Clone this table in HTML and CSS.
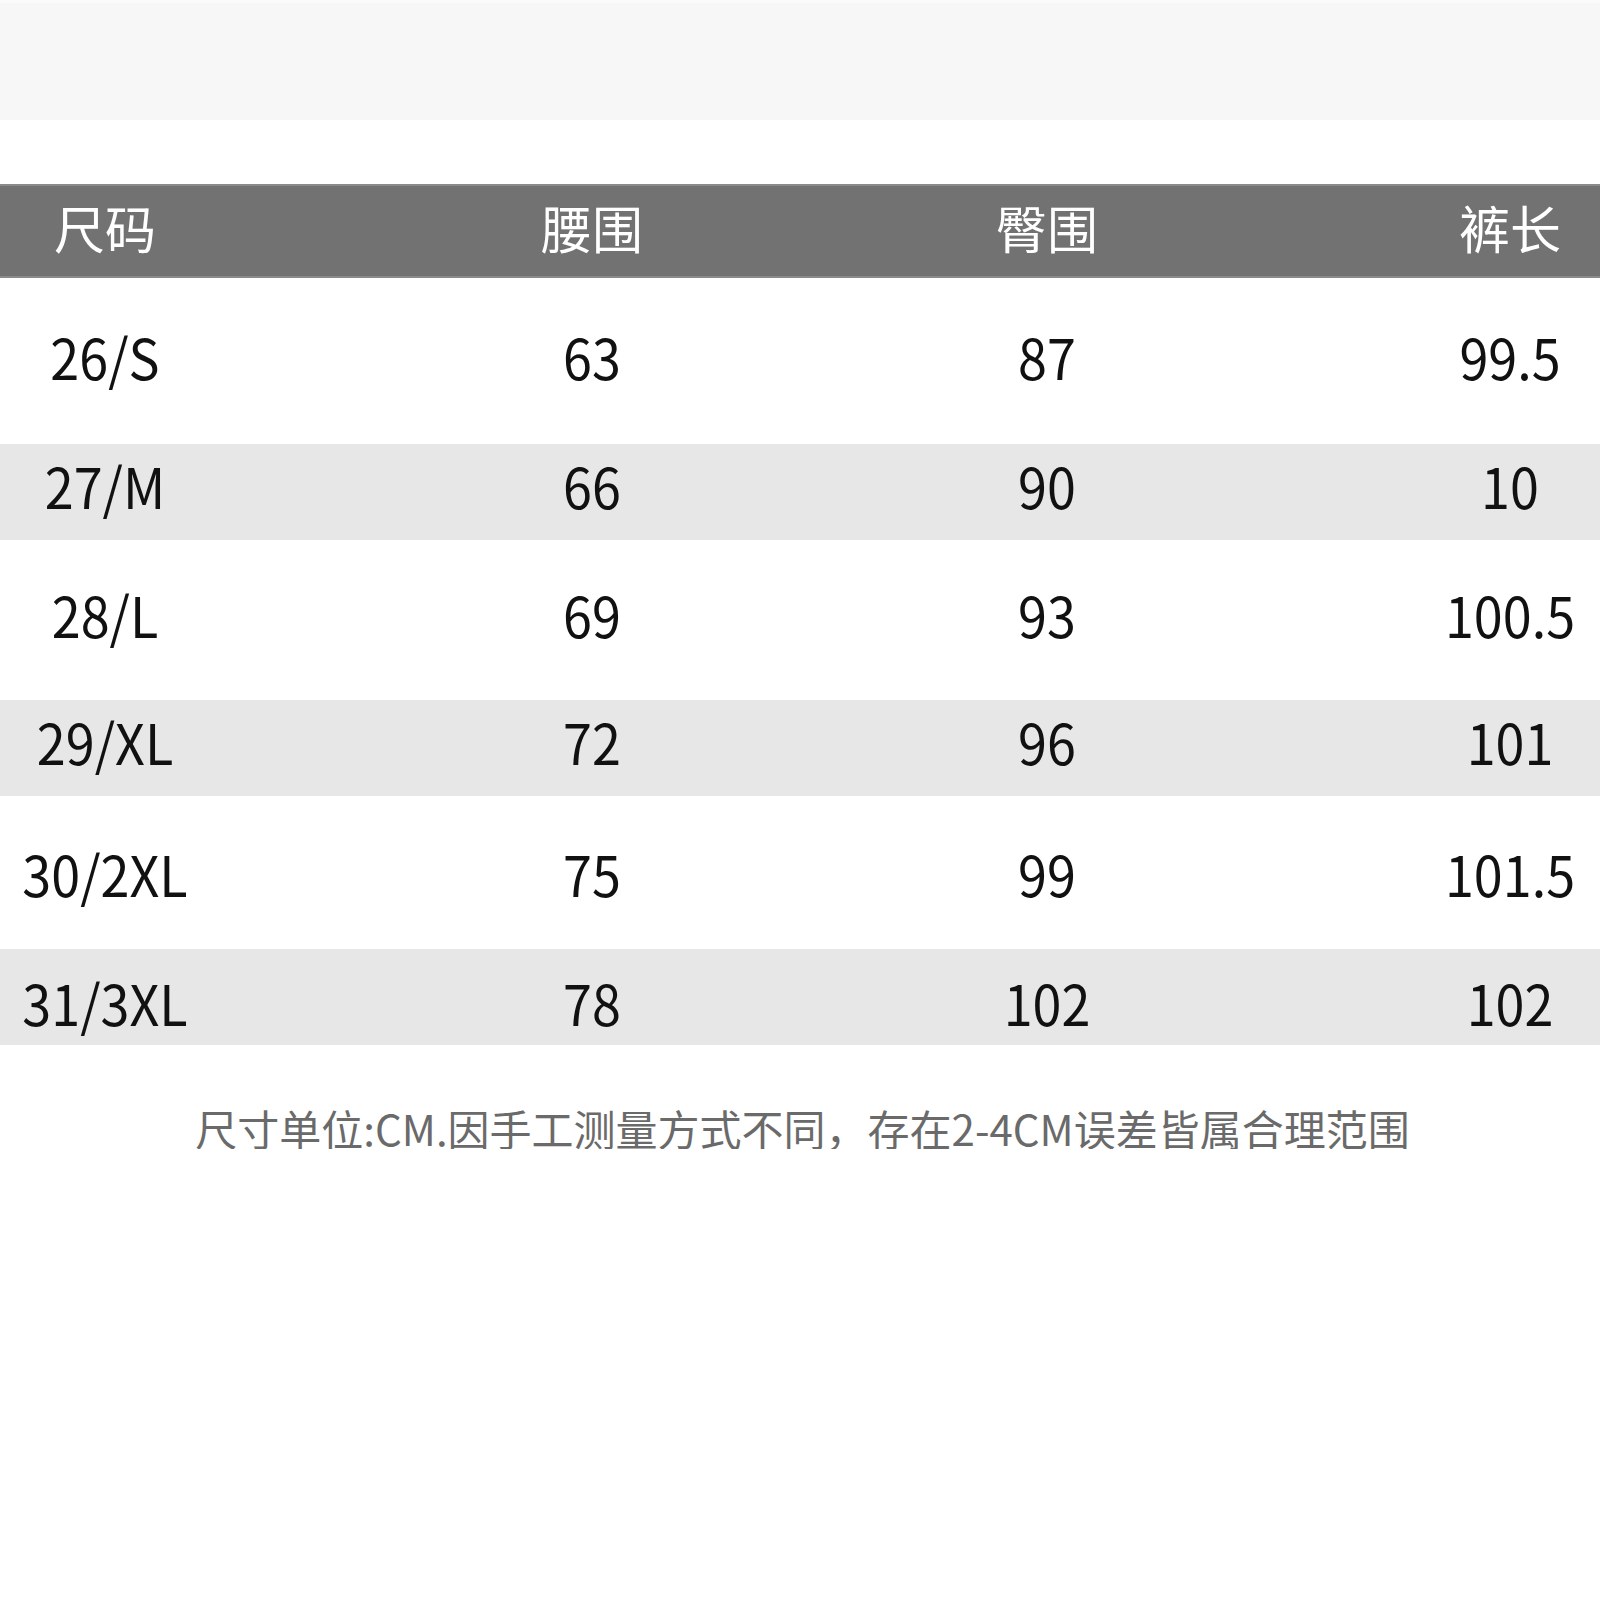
FILE: index.html
```html
<!DOCTYPE html>
<html lang="zh-CN">
<head>
<meta charset="utf-8">
<title>尺码表</title>
<link rel="stylesheet" href="styles.css">
</head>
<body>
<div class="page">
  <div class="top-band"></div>
  <div class="table">
    <div class="row head">
      <div class="cell c1">尺码</div>
      <div class="cell c2">腰围</div>
      <div class="cell c3">臀围</div>
      <div class="cell c4">裤长</div>
    </div>
    <div class="row tall">
      <div class="cell c1">26/S</div>
      <div class="cell c2">63</div>
      <div class="cell c3">87</div>
      <div class="cell c4">99.5</div>
    </div>
    <div class="row shade">
      <div class="cell c1">27/M</div>
      <div class="cell c2">66</div>
      <div class="cell c3">90</div>
      <div class="cell c4">10</div>
    </div>
    <div class="row tall2">
      <div class="cell c1">28/L</div>
      <div class="cell c2">69</div>
      <div class="cell c3">93</div>
      <div class="cell c4">100.5</div>
    </div>
    <div class="row shade">
      <div class="cell c1">29/XL</div>
      <div class="cell c2">72</div>
      <div class="cell c3">96</div>
      <div class="cell c4">101</div>
    </div>
    <div class="row tall3">
      <div class="cell c1">30/2XL</div>
      <div class="cell c2">75</div>
      <div class="cell c3">99</div>
      <div class="cell c4">101.5</div>
    </div>
    <div class="row shade last">
      <div class="cell c1">31/3XL</div>
      <div class="cell c2">78</div>
      <div class="cell c3">102</div>
      <div class="cell c4">102</div>
    </div>
  </div>
  <p class="note">尺寸单位:CM.因手工测量方式不同，存在2-4CM误差皆属合理范围</p>
</div>
</body>
</html>
```

FILE: styles.css
```css
html, body {
  margin: 0;
  padding: 0;
  background: #ffffff;
}

body {
  font-family: "Noto Sans CJK SC", "Noto Sans", sans-serif;
  color: #111111;
}

.page {
  width: 1600px;
  display: flex;
  flex-direction: column;
}

.top-band {
  height: 120px;
  background: #f7f7f7;
  border-top: 3px solid #fbfbfb;
  box-sizing: border-box;
}

.table {
  margin-top: 64px;
  display: flex;
  flex-direction: column;
}

.row {
  display: grid;
  grid-template-columns: 210px 282px 200px 255px 200px 273px 180px;
  align-items: center;
  font-size: 56px;
  line-height: 1;
  box-sizing: border-box;
}

.cell {
  text-align: center;
  white-space: nowrap;
}

.row:not(.head) .cell {
  transform: scaleX(0.93);
}

.c1 { grid-column: 1; }
.c2 { grid-column: 3; }
.c3 { grid-column: 5; }
.c4 { grid-column: 7; }

.head {
  height: 94px;
  background: #727272;
  color: #ffffff;
  font-size: 51px;
  border-top: 2px solid #8a8a8a;
  border-bottom: 2px solid #8a8a8a;
  padding-bottom: 8px;
}

.tall { height: 166px; padding-bottom: 10px; }
.tall2 { height: 160px; padding-bottom: 12px; }
.tall3 { height: 153px; }

.shade {
  height: 96px;
  background: #e7e7e7;
  padding-bottom: 14px;
}

.shade.last {
  padding-bottom: 0;
  padding-top: 10px;
}

.note {
  margin: 62px 0 0 0;
  text-align: center;
  font-size: 42px;
  line-height: 1;
  color: #6a6a6a;
  padding-left: 5px;
}
```
